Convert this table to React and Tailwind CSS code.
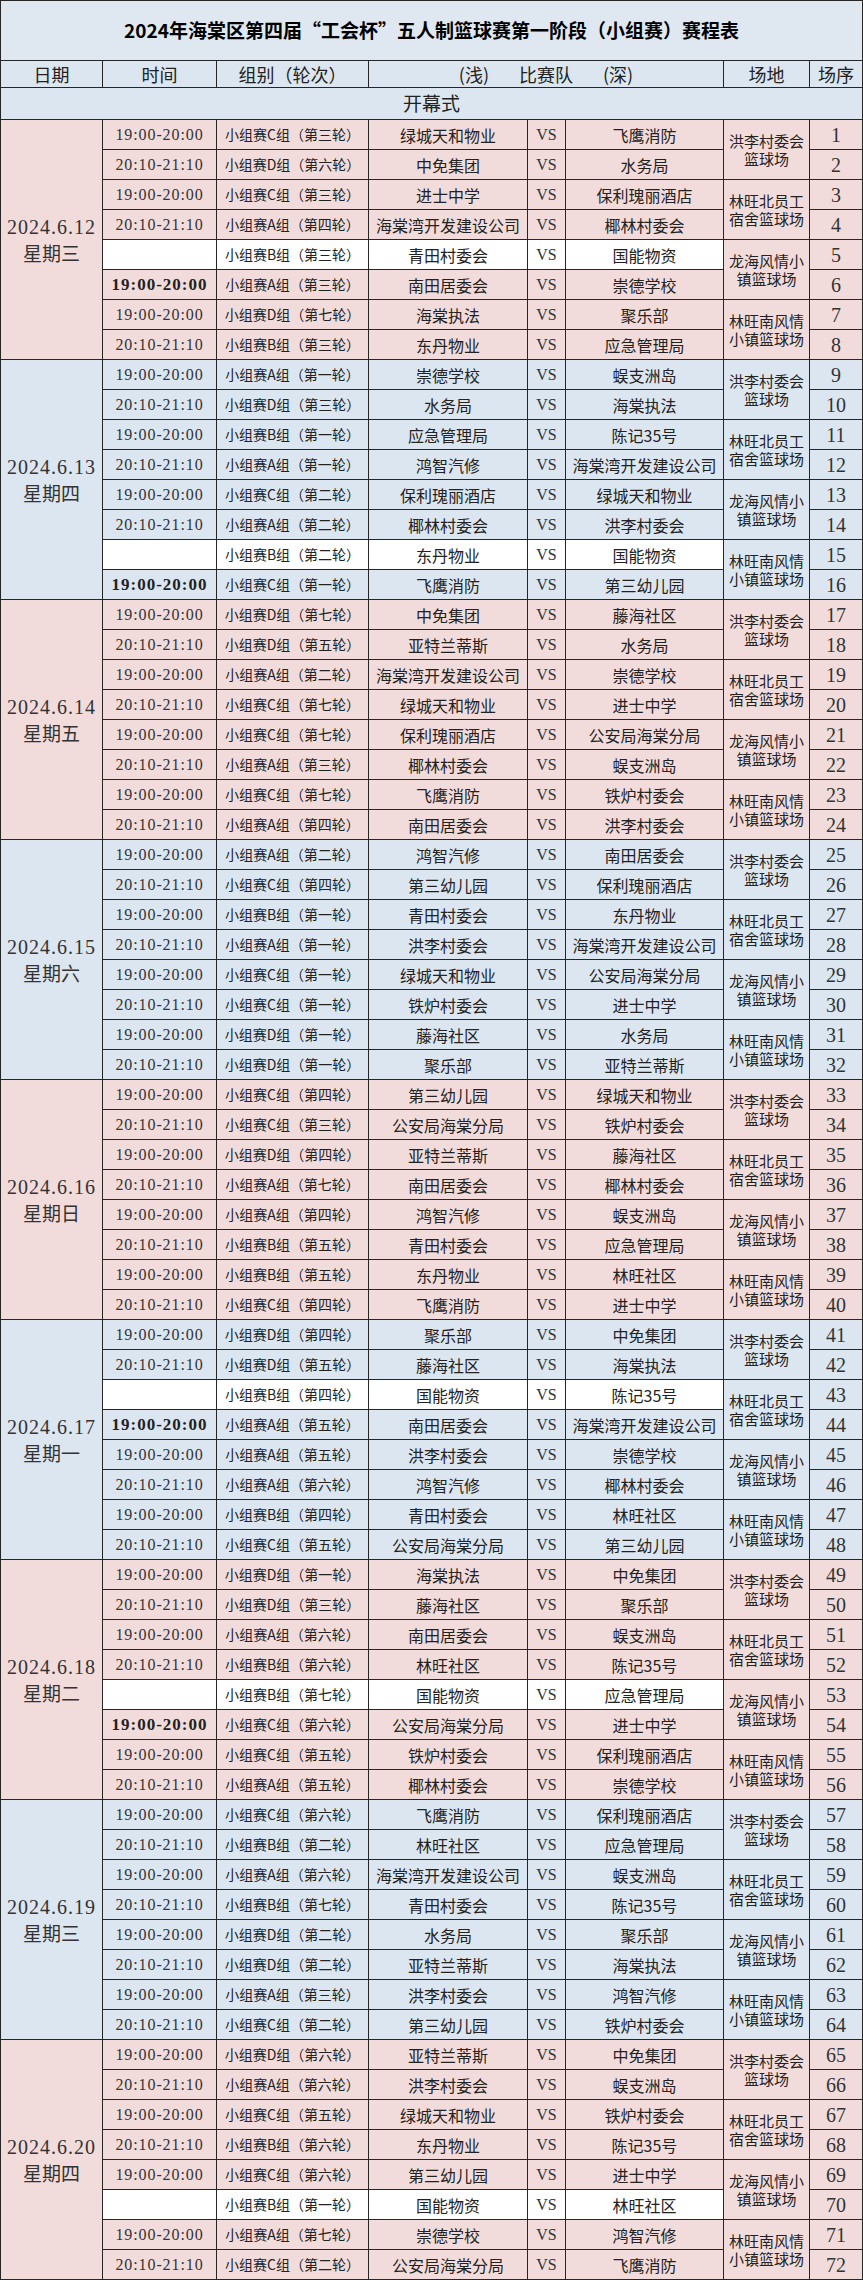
import React from 'react';

const VENUES = [
  ['洪李村委会', '篮球场'],
  ['林旺北员工', '宿舍篮球场'],
  ['龙海风情小', '镇篮球场'],
  ['林旺南风情', '小镇篮球场'],
];

const DAYS = [
  {
    date: '2024.6.12', wd: '星期三', pink: true, rows: [
      ['a', 'C', '三', '绿城天和物业', '飞鹰消防'],
      ['b', 'D', '六', '中免集团', '水务局'],
      ['a', 'C', '三', '进士中学', '保利瑰丽酒店'],
      ['b', 'A', '四', '海棠湾开发建设公司', '椰林村委会'],
      ['', 'B', '三', '青田村委会', '国能物资'],
      ['B', 'A', '三', '南田居委会', '崇德学校'],
      ['a', 'D', '七', '海棠执法', '聚乐部'],
      ['b', 'B', '三', '东丹物业', '应急管理局'],
    ],
  },
  {
    date: '2024.6.13', wd: '星期四', pink: false, rows: [
      ['a', 'A', '一', '崇德学校', '蜈支洲岛'],
      ['b', 'D', '三', '水务局', '海棠执法'],
      ['a', 'B', '一', '应急管理局', '陈记35号'],
      ['b', 'A', '一', '鸿智汽修', '海棠湾开发建设公司'],
      ['a', 'C', '二', '保利瑰丽酒店', '绿城天和物业'],
      ['b', 'A', '二', '椰林村委会', '洪李村委会'],
      ['', 'B', '二', '东丹物业', '国能物资'],
      ['B', 'C', '一', '飞鹰消防', '第三幼儿园'],
    ],
  },
  {
    date: '2024.6.14', wd: '星期五', pink: true, rows: [
      ['a', 'D', '七', '中免集团', '藤海社区'],
      ['b', 'D', '五', '亚特兰蒂斯', '水务局'],
      ['a', 'A', '二', '海棠湾开发建设公司', '崇德学校'],
      ['b', 'C', '七', '绿城天和物业', '进士中学'],
      ['a', 'C', '七', '保利瑰丽酒店', '公安局海棠分局'],
      ['b', 'A', '三', '椰林村委会', '蜈支洲岛'],
      ['a', 'C', '七', '飞鹰消防', '铁炉村委会'],
      ['b', 'A', '四', '南田居委会', '洪李村委会'],
    ],
  },
  {
    date: '2024.6.15', wd: '星期六', pink: false, rows: [
      ['a', 'A', '二', '鸿智汽修', '南田居委会'],
      ['b', 'C', '四', '第三幼儿园', '保利瑰丽酒店'],
      ['a', 'B', '一', '青田村委会', '东丹物业'],
      ['b', 'A', '一', '洪李村委会', '海棠湾开发建设公司'],
      ['a', 'C', '一', '绿城天和物业', '公安局海棠分局'],
      ['b', 'C', '一', '铁炉村委会', '进士中学'],
      ['a', 'D', '一', '藤海社区', '水务局'],
      ['b', 'D', '一', '聚乐部', '亚特兰蒂斯'],
    ],
  },
  {
    date: '2024.6.16', wd: '星期日', pink: true, rows: [
      ['a', 'C', '四', '第三幼儿园', '绿城天和物业'],
      ['b', 'C', '三', '公安局海棠分局', '铁炉村委会'],
      ['a', 'D', '四', '亚特兰蒂斯', '藤海社区'],
      ['b', 'A', '七', '南田居委会', '椰林村委会'],
      ['a', 'A', '四', '鸿智汽修', '蜈支洲岛'],
      ['b', 'B', '五', '青田村委会', '应急管理局'],
      ['a', 'B', '五', '东丹物业', '林旺社区'],
      ['b', 'C', '四', '飞鹰消防', '进士中学'],
    ],
  },
  {
    date: '2024.6.17', wd: '星期一', pink: false, rows: [
      ['a', 'D', '四', '聚乐部', '中免集团'],
      ['b', 'D', '五', '藤海社区', '海棠执法'],
      ['', 'B', '四', '国能物资', '陈记35号'],
      ['B', 'A', '五', '南田居委会', '海棠湾开发建设公司'],
      ['a', 'A', '五', '洪李村委会', '崇德学校'],
      ['b', 'A', '六', '鸿智汽修', '椰林村委会'],
      ['a', 'B', '四', '青田村委会', '林旺社区'],
      ['b', 'C', '五', '公安局海棠分局', '第三幼儿园'],
    ],
  },
  {
    date: '2024.6.18', wd: '星期二', pink: true, rows: [
      ['a', 'D', '一', '海棠执法', '中免集团'],
      ['b', 'D', '三', '藤海社区', '聚乐部'],
      ['a', 'A', '六', '南田居委会', '蜈支洲岛'],
      ['b', 'B', '六', '林旺社区', '陈记35号'],
      ['', 'B', '七', '国能物资', '应急管理局'],
      ['B', 'C', '六', '公安局海棠分局', '进士中学'],
      ['a', 'C', '五', '铁炉村委会', '保利瑰丽酒店'],
      ['b', 'A', '五', '椰林村委会', '崇德学校'],
    ],
  },
  {
    date: '2024.6.19', wd: '星期三', pink: false, rows: [
      ['a', 'C', '六', '飞鹰消防', '保利瑰丽酒店'],
      ['b', 'B', '二', '林旺社区', '应急管理局'],
      ['a', 'A', '六', '海棠湾开发建设公司', '蜈支洲岛'],
      ['b', 'B', '七', '青田村委会', '陈记35号'],
      ['a', 'D', '二', '水务局', '聚乐部'],
      ['b', 'D', '二', '亚特兰蒂斯', '海棠执法'],
      ['a', 'A', '三', '洪李村委会', '鸿智汽修'],
      ['b', 'C', '二', '第三幼儿园', '铁炉村委会'],
    ],
  },
  {
    date: '2024.6.20', wd: '星期四', pink: true, rows: [
      ['a', 'D', '六', '亚特兰蒂斯', '中免集团'],
      ['b', 'A', '六', '洪李村委会', '蜈支洲岛'],
      ['a', 'C', '五', '绿城天和物业', '铁炉村委会'],
      ['b', 'B', '六', '东丹物业', '陈记35号'],
      ['a', 'C', '六', '第三幼儿园', '进士中学'],
      ['', 'B', '一', '国能物资', '林旺社区'],
      ['a', 'A', '七', '崇德学校', '鸿智汽修'],
      ['b', 'C', '二', '公安局海棠分局', '飞鹰消防'],
    ],
  },
];

const cell = 'flex items-center justify-center text-[#222] whitespace-nowrap';
const serif = "font-['Liberation_Serif','Noto_Sans_CJK_SC',serif]";

function dayCells(day, startNo) {
  const bg = day.pink ? 'bg-[#f2dcdb]' : 'bg-[#dce6f1]';
  const items = [];
  day.rows.forEach((r, i) => {
    const [t, g, rd, a, b] = r;
    const white = t === '';
    const rowBg = white ? 'bg-white' : bg;
    const no = startNo + i;
    if (i === 0) {
      items.push(
        <div key={`d${no}`} className={`${cell} ${bg} row-span-8 flex-col text-[#333]`}>
          <div className={`${serif} text-[20px] leading-[25px] tracking-[1px]`}>{day.date}</div>
          <div className="text-[19px] leading-[25px]">{day.wd}</div>
        </div>
      );
    }
    items.push(
      <div
        key={`t${no}`}
        className={`${cell} ${serif} ${rowBg} ${t === 'B' ? 'text-[17px] font-bold tracking-[1px] text-[#111]' : 'text-[16px] tracking-[0.9px] text-[#333]'}`}
      >
        {t === 'a' ? '19:00-20:00' : t === 'b' ? '20:10-21:10' : t === 'B' ? '19:00-20:00' : ''}
      </div>
    );
    items.push(
      <div key={`g${no}`} className={`${cell} ${rowBg} text-[14px]`}>
        {`小组赛${g}组（第${rd}轮）`}
      </div>
    );
    items.push(
      <div key={`a${no}`} className={`${cell} ${rowBg} text-[16px]`}>{a}</div>
    );
    items.push(
      <div key={`v${no}`} className={`${cell} ${serif} ${rowBg} text-[16px] text-[#333]`}>VS</div>
    );
    items.push(
      <div key={`b${no}`} className={`${cell} ${rowBg} text-[16px]`}>{b}</div>
    );
    if (i % 2 === 0) {
      const v = VENUES[i / 2];
      items.push(
        <div key={`p${no}`} className={`${cell} ${bg} row-span-2 flex-col text-[15px] leading-[18px]`}>
          <div>{v[0]}</div>
          <div>{v[1]}</div>
        </div>
      );
    }
    items.push(
      <div key={`n${no}`} className={`${cell} ${serif} ${bg} text-[20px] text-[#333]`}>{no}</div>
    );
  });
  return items;
}

export default function App() {
  let n = 1;
  const blocks = DAYS.map((d) => {
    const start = n;
    n += d.rows.length;
    return dayCells(d, start);
  });
  return (
    <div className="w-[863px] bg-white font-['Noto_Sans_CJK_SC','Noto_Sans',sans-serif]">
      <div className="grid border border-[#262626] bg-[#262626] gap-px grid-cols-[101px_113px_151px_158px_37px_157px_85px_52px] grid-rows-[59px_26px_31px_repeat(72,29px)]">
        <div className="col-span-8 flex items-center justify-center bg-[#dfe7f0] text-[19px] font-bold text-black">
          2024年海棠区第四届“工会杯”五人制篮球赛第一阶段（小组赛）赛程表
        </div>
        <div className={`${cell} bg-[#dce6f0] text-[18px]`}>日期</div>
        <div className={`${cell} bg-[#dce6f0] text-[18px]`}>时间</div>
        <div className={`${cell} bg-[#dce6f0] text-[18px]`}>组别（轮次）</div>
        <div className={`${cell} col-span-3 bg-[#dce6f0] text-[18px] gap-[30px]`}>
          <span>(浅)</span>
          <span>比赛队</span>
          <span>(深)</span>
        </div>
        <div className={`${cell} bg-[#dce6f0] text-[18px]`}>场地</div>
        <div className={`${cell} bg-[#dce6f0] text-[18px]`}>场序</div>
        <div className={`${cell} col-span-8 bg-[#dce6f0] text-[19px]`}>开幕式</div>
        {blocks}
      </div>
    </div>
  );
}
